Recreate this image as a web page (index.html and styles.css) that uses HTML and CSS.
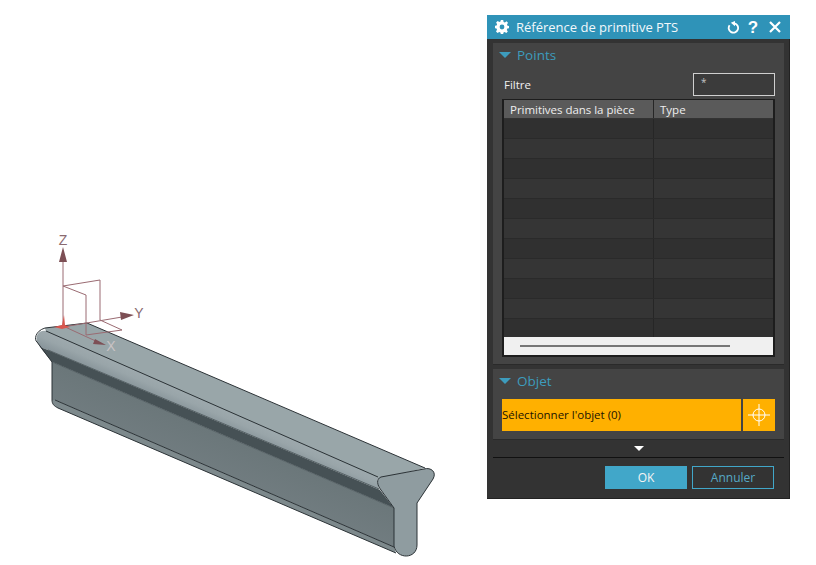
FILE: index.html
```html
<!DOCTYPE html>
<html lang="fr">
<head>
<meta charset="utf-8">
<title>Référence de primitive PTS</title>
<link rel="stylesheet" href="styles.css">
</head>
<body>
<div class="stage">
  <svg class="model" width="487" height="565" viewBox="0 0 487 565">
    <defs>
      <linearGradient id="lip" gradientUnits="userSpaceOnUse" x1="190" y1="385" x2="176" y2="417">
        <stop offset="0" stop-color="#a3aeb2"/>
        <stop offset="0.45" stop-color="#99a5a9"/>
        <stop offset="1" stop-color="#76838a"/>
      </linearGradient>
      <linearGradient id="wall" gradientUnits="userSpaceOnUse" x1="210" y1="430" x2="190" y2="478">
        <stop offset="0" stop-color="#6b777a"/>
        <stop offset="1" stop-color="#737e82"/>
      </linearGradient>
      <linearGradient id="band" gradientUnits="userSpaceOnUse" x1="190" y1="420" x2="183" y2="436">
        <stop offset="0" stop-color="#465155"/>
        <stop offset="1" stop-color="#566165"/>
      </linearGradient>
    </defs>
    <path class="top" d="M45 328 87 323 425 468 378 479 46 332Z"/>
    <path fill="url(#lip)" d="M46 331 378 478C377 483 378 487 380 490L48 350 40 347 37 342C35 336 39 329 46 331Z"/>
    <path fill="url(#band)" d="M40 347 48 350 380 490 394 508 52 362Z"/>
    <path fill="url(#wall)" d="M52 362 394 508V547L55 400 52 400Z"/>
    <path class="foot" d="M52 400 55 400 394 547 396 553 58 408C54 406 52 404 52 400Z"/>
    <path class="end" d="M381 477 424 469C431 467 437 472 433 479L417 503V545C417 559 397 560 394 546V508L381 490C377 485 376 479 381 477Z"/>
    <path class="edge soft" d="M52 362 394 508M48 350 379 489"/>
    <path class="edge" d="M87 323 425 468M46 331 378 477M55 400 394 547M58 408 396 553M52 362V400C52 404 54 406 58 408M45 328 87 323M45 328C35 331 34 340 37 342L52 362"/>
    <path class="edge" d="M381 477 424 469C431 467 437 472 433 479L417 503V545C417 559 397 560 394 546V508L381 490C377 485 376 479 381 477Z"/>
    <g class="triad">
      <path d="M63 326V258M63 286 100 280V320M63 286 86 295V335M86 335 122 330 100 320M63 327 122 317M63 326 100 343"/>
    </g>
    <path class="head" d="M63 247 67 262H59ZM134 315 120 312 121 320ZM106 345 95 339 93 344Z"/>
    <path class="origin" d="M54 327 62 325 64 315 65 325 70 327 62 329Z"/>
    <text class="axis" x="63" y="245">Z</text>
    <text class="axis" x="139" y="318">Y</text>
    <text class="axis axis-x" x="111" y="351">X</text>
  </svg>

  <section class="dialog">
    <header class="titlebar">
      <svg class="gear" width="14" height="14" viewBox="0 0 14 14">
        <path fill="#fff" fill-rule="evenodd" d="M5.8 0H8.2L8.6 1.9 9.9 2.4 11.5 1.3 13 2.8 12 4.4 12.5 5.7 14 6V8.2L12.3 8.6 11.8 9.9 12.8 11.5 11.3 13 9.7 12 8.5 12.4 8.2 14H5.8L5.4 12.4 4.2 11.9 2.6 13 1 11.4 2 9.8 1.5 8.5 0 8.2V5.8L1.6 5.4 2.1 4.2 1.1 2.6 2.7 1 4.3 2 5.5 1.6ZM7 4.6A2.4 2.4 0 1 0 7 9.4 2.4 2.4 0 1 0 7 4.6Z"/>
      </svg>
      <span class="title">Référence de primitive PTS</span>
      <svg class="tool" width="13" height="13" viewBox="0 0 13 13">
        <path class="stroke mid" d="M7.5 2.4A4.7 4.7 0 1 1 2.6 4.2"/>
        <path fill="#fff" d="M8 0 8 5.2 3.8 1.8Z"/>
      </svg>
      <span class="help">?</span>
      <svg class="tool" width="12" height="12" viewBox="0 0 12 12">
        <path class="stroke thick" d="M1 1 11 11M11 1 1 11"/>
      </svg>
    </header>

    <div class="body">
      <div class="group points">
        <h2 class="group-title"><i class="caret"></i>Points</h2>
        <div class="filter">
          <label>Filtre</label>
          <div class="input">*</div>
        </div>
        <div class="table">
          <div class="thead">
            <div class="c1">Primitives dans la pièce</div>
            <div class="c2">Type</div>
          </div>
          <div class="row"><div class="c1"></div><div class="c2"></div></div>
          <div class="row alt"><div class="c1"></div><div class="c2"></div></div>
          <div class="row"><div class="c1"></div><div class="c2"></div></div>
          <div class="row alt"><div class="c1"></div><div class="c2"></div></div>
          <div class="row"><div class="c1"></div><div class="c2"></div></div>
          <div class="row alt"><div class="c1"></div><div class="c2"></div></div>
          <div class="row"><div class="c1"></div><div class="c2"></div></div>
          <div class="row alt"><div class="c1"></div><div class="c2"></div></div>
          <div class="row"><div class="c1"></div><div class="c2"></div></div>
          <div class="row alt"><div class="c1"></div><div class="c2"></div></div>
          <div class="row last"><div class="c1"></div><div class="c2"></div></div>
          <div class="scroll"><div class="thumb"></div></div>
        </div>
      </div>

      <div class="group object">
        <h2 class="group-title"><i class="caret"></i>Objet</h2>
        <div class="select">
          <div class="select-label">Sélectionner l'objet (0)</div>
          <div class="select-btn">
            <svg width="22" height="22" viewBox="0 0 22 22">
              <circle class="stroke thin" cx="11" cy="11" r="6"/>
              <path class="stroke thin" d="M0 11H22M11 0V22"/>
            </svg>
          </div>
        </div>
      </div>

      <div class="more"><i class="caret white"></i></div>
      <div class="actions">
        <button class="btn primary">OK</button>
        <button class="btn ghost">Annuler</button>
      </div>
    </div>
  </section>
</div>
</body>
</html>
```

FILE: styles.css
```css
* { box-sizing: border-box; }
html, body { margin: 0; padding: 0; background: #fff; }
body { width: 816px; height: 565px; overflow: hidden; font-family: "Open Sans", "Noto Sans", sans-serif; }
.stage { display: flex; align-items: flex-start; }
.model { flex: none; display: block; }
.top { fill: #99a6a9; }
.foot { fill: #7d898c; }
.end { fill: #8f9ca0; }
.edge { fill: none; stroke: #2b3236; stroke-width: 1; }
.edge.soft { stroke: #566165; }
.triad path { fill: none; stroke: #9a6b72; stroke-width: 1; }
.head { fill: #7d4f55; }
.origin { fill: #d8574f; }
.axis { font-size: 14px; fill: #8a6a70; text-anchor: middle; font-family: "Liberation Sans", sans-serif; }
.axis-x { fill: #c9c3c5; }

.dialog { flex: none; width: 303px; height: 484px; margin-top: 15px; background: #333; display: flex; flex-direction: column; box-shadow: inset -1px -1px 0 #222; }
.titlebar { height: 24px; background: #2f93b8; display: flex; align-items: center; padding: 0 9px 0 8px; color: #fff; flex: none; }
.gear { flex: none; }
.title { font-size: 13px; margin-left: 7px; flex: 1; white-space: nowrap; color: #f2f8fb; }
.tool { flex: none; }
.help { font-size: 17px; font-weight: 700; width: 12px; margin: 0 10px 0 7px; text-align: center; line-height: 1; font-family: "Liberation Sans", sans-serif; }
.stroke { fill: none; stroke: #fff; stroke-width: 1.4; }
.mid { stroke-width: 1.8; }
.thin { stroke-width: 1; }
.thick { stroke-width: 2.2; }

.body { flex: 1; padding: 4px 6px 0; display: flex; flex-direction: column; }
.group { background: #444; border-bottom: 1px solid #2a2a2a; padding: 0 9px; }
.points { height: 322px; }
.object { height: 71px; margin-top: 4px; }
.group-title { margin: 0 0 0 -3px; height: 24px; font-weight: 400; font-size: 13.5px; color: #3d9cbd; display: flex; align-items: center; }
.caret { width: 0; height: 0; border-left: 6px solid transparent; border-right: 6px solid transparent; border-top: 6px solid #3d9cbd; margin-right: 6px; }
.caret.white { border-left-width: 5px; border-right-width: 5px; border-top: 5px solid #fff; margin: 0; }
.filter { display: flex; align-items: center; justify-content: space-between; height: 23px; margin: 6px 0 3px 2px; font-size: 11.5px; color: #f0f0f0; }
.input { width: 82px; height: 23px; border: 1px solid #cfcfcf; background: #3b3b3b; padding: 1px 7px; font-size: 10px; color: #c4c4c4; }
.table { width: 273px; height: 258px; background: #2a2a2a; border: 1px solid #1d1d1d; border-width: 1px 2px 2px 2px; display: flex; flex-direction: column; }
.thead, .row { display: flex; flex: none; }
.thead { height: 19px; background: #5a5a5a; border-bottom: 1px solid #333; font-size: 11.5px; color: #eee; line-height: 19px; }
.c1 { width: 150px; padding-left: 6px; border-right: 1px solid #262626; white-space: nowrap; letter-spacing: -0.03px; }
.c2 { flex: 1; padding-left: 6px; }
.row { height: 20px; background: #303030; border-bottom: 1px solid #2a2a2a; }
.row.alt { background: #353535; }
.row.last { height: 18px; border-bottom: 0; }
.scroll { flex: 1; background: #f0f0f0; display: flex; align-items: center; padding-left: 16px; }
.thumb { width: 210px; height: 2px; background: #777; }

.select { display: flex; height: 32px; margin-top: 6px; gap: 2px; }
.select-label { width: 239px; background: #ffb000; color: #1c1400; font-size: 11.5px; line-height: 32px; white-space: nowrap; }
.select-btn { width: 32px; background: #ffb000; display: flex; align-items: center; justify-content: center; }

.more { height: 18px; display: flex; align-items: center; justify-content: center; border-bottom: 1px solid #111; flex: none; }
.actions { display: flex; justify-content: flex-end; gap: 5px; padding: 8px 10px 0 0; }
.btn { height: 23px; font-family: inherit; font-size: 12px; padding: 0; }
.primary { width: 82px; background: #41a7c9; border: 0; color: #f4f4f4; }
.ghost { width: 82px; background: transparent; border: 1px solid #41a7c9; color: #56a9c6; }
```
